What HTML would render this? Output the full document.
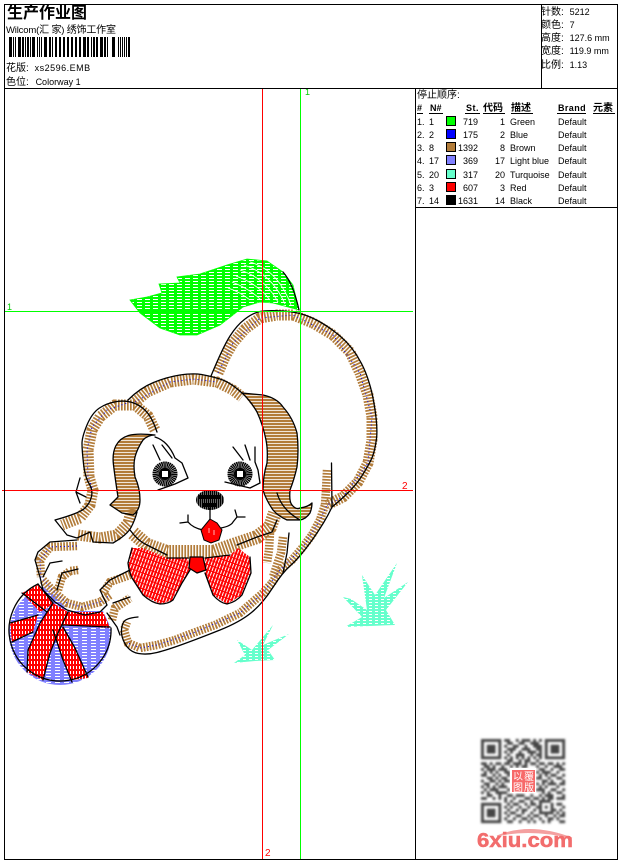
<!DOCTYPE html>
<html><head><meta charset="utf-8"><style>
html,body{margin:0;padding:0;background:#fff;width:620px;height:860px;overflow:hidden}
svg{display:block}
text{font-family:"Liberation Sans","WenQuanYi Zen Hei","Noto Sans CJK SC",sans-serif;font-size:9px;fill:#000}
.c{font-size:10px}
.b{font-weight:bold}
.e{text-anchor:end}
.s{fill:none;stroke:#b27c3a;stroke-width:11;stroke-dasharray:1.700 1.300}
.w{fill:none;stroke:#b27c3a;stroke-width:14;stroke-dasharray:1.700 1.300}
.s2{fill:none;stroke:#b27c3a;stroke-width:8.500;stroke-dasharray:1.700 1.300}
.d{fill:none;stroke:#00f;stroke-width:1;stroke-dasharray:1 3}
.k{fill:none;stroke:#000;stroke-width:1.3;stroke-linejoin:round;stroke-linecap:round}
.sw{stroke:#000;stroke-width:1}
.tw{fill:none;stroke:#fff;stroke-width:.8}
</style></head><body>
<svg width="620" height="860" viewBox="0 0 620 860" xmlns="http://www.w3.org/2000/svg">
<defs>
<pattern id="pg" width="8" height="3" patternUnits="userSpaceOnUse"><rect width="8" height="3" fill="#0f0"/><rect x="1" y="2" width="5" height="1" fill="#fff"/></pattern>
<pattern id="pb" width="3" height="3" patternUnits="userSpaceOnUse"><rect width="3" height="2.200" fill="#b27c3a"/></pattern>
<pattern id="pl" width="9" height="3" patternUnits="userSpaceOnUse"><rect width="9" height="3" fill="#8080ff"/><rect y="1" x="1" width="5" height="1" fill="#fff"/></pattern>
<pattern id="pr" width="3" height="5" patternUnits="userSpaceOnUse"><rect width="3" height="5" fill="#f00"/><rect x="1" y="1" width="1" height="3" fill="#fff"/></pattern>
<pattern id="prb" width="3" height="5" patternUnits="userSpaceOnUse" patternTransform="rotate(20)"><rect width="3" height="5" fill="#f00"/><rect x="1" y="0" width="1" height="4" fill="#fff"/></pattern>
<pattern id="pt" width="6" height="3" patternUnits="userSpaceOnUse"><rect width="6" height="2" fill="#66ffcc"/><rect y="2" width="3" height="1" fill="#66ffcc"/></pattern>
<pattern id="pn" width="2" height="6" patternUnits="userSpaceOnUse"><rect width="1.600" height="6" fill="#000"/></pattern>
<filter id="bl"><feGaussianBlur stdDeviation="0.4"/></filter>
</defs>

<!-- tail -->
<path d="M130 300L147 297L162 293L159 284L180 283L177 277L200 274L227 265L247 259L267 261L283 272L293 285L299 310L273 303L260 302L243 307L233 315L220 325L197 335L180 335L160 328L140 313Z" fill="url(#pg)" stroke="#0f0" stroke-width=".8"/>
<path class="tw" d="M250 262Q278 270 291 305M244 265Q272 274 285 304M240 270Q265 278 278 302M236 276Q258 284 270 300M232 282Q248 288 260 299M228 288Q240 292 250 300"/>
<path d="M283 272Q293 283 299 310" class="k"/>

<!-- ball -->
<circle cx="60" cy="634" r="51" fill="url(#pl)"/>
<path d="M22 593L38 585L53 603L47 608L40 612Z" fill="url(#pr)"/>
<path d="M53 603L68 612L58 633L50 653L43 680L27 672L28 650L40 623Z" fill="url(#pr)"/>
<path d="M10 623L38 615L33 632L12 642Z" fill="url(#pr)"/>
<path d="M68 612L103 612L110 628L62 625Z" fill="url(#pr)"/>
<path d="M53 630L63 627L75 648L88 678L72 680L63 660Z" fill="url(#pr)"/>
<path d="M38 583L57 597L68 611L103 611L111 628L125 610L100 570L50 570Z" fill="#fff"/>
<path class="k" d="M38 584A51 51 0 1 0 111 628"/>
<path class="k" d="M22 593L47 612M38 584L53 603M10 623L38 615M12 642L33 632M62 625L110 627M53 603L40 623L28 650L27 672M68 612L58 633L50 653L43 680M53 630L63 660L72 682M63 627L75 648L88 677"/>

<!-- brown stitch bands -->
<path class="s" d="M218 373L225 357L233 343L245 329L260 318L277 315L293 315L313 323L333 335L350 352L360 373L368 395L372 417L372 440L368 463L358 482L343 497L327 505"/>
<path class="s2" d="M327 470L326 490L325 505L320 520L312 535L303 547L292 560L280 570L272 583L263 593L240 613L215 625L193 633L175 640L157 645L140 648L128 643L124 630L127 622"/>
<path class="s" d="M135 402L147 392L170 382L193 379L217 382L233 390L242 397"/>
<path class="s" d="M155 430L148 416L135 405L115 405L100 417L92 430L88 450L89 477L93 490L90 505L80 518L62 525"/>
<path class="s" d="M78 535L100 538L117 535L128 523L132 508"/>
<path class="w" d="M133 533L147 545L167 552L190 552L213 552L233 545L257 537L270 527L275 513"/>
<path class="s2" d="M283 537L281 553L273 577"/>
<path class="s2" d="M270 533L269 550L267 563"/>
<path class="s2" d="M77 546L50 547L40 560L41 577"/>
<path class="s2" d="M43 580L55 593L67 603L82 607L100 602L110 595"/>
<path class="s2" d="M58 590L62 577L70 571L78 570"/>
<path class="s2" d="M103 593L110 582L130 575"/>
<path class="s2" d="M112 620L115 608L130 598"/>
<path d="M155 435Q137 433 128.500 435.500T116 445.500T113.500 465T116.500 487L118 497L110 505L122 513L133 515Q140 510 140 500Q140 488 135 477Q133 465 135 457T143 440Q148 435 155 435Z" fill="url(#pb)"/>
<path d="M242 393L263 395Q277 398 283 407Q293 418 297 433Q299 450 297 467Q294 480 290 490Q289 502 292 505Q296 510 300 508Q308 507 312 503Q312 508 310 513Q306 519 300 520L287 520Q278 516 273 510Q266 500 263 490Q263 476 267 463Q268 450 266 440Q263 425 257 412Z" fill="url(#pb)"/>

<!-- blue running stitch -->
<path class="d" d="M218 373L233 343L260 318L293 315L333 335L360 373L372 417L368 463L343 497L327 505L320 520L303 547L280 570L263 593L240 613L193 633L157 645L140 648L128 643"/>
<path class="d" d="M135 402L170 382L193 379L217 382M130 402L107 410L92 427L87 450L88 477L93 490"/>
<path class="d" d="M77 546L50 547L40 560L41 577L55 593L67 603L82 607L100 602L110 595"/>

<!-- bow -->
<path d="M132 548L143 548L167 558L188 558L190 570L182 583L173 600L160 604L143 595L132 578L128 563Z" fill="url(#prb)"/>
<path d="M205 558L230 555L238 548L250 557L251 573L242 595L227 604L213 595L205 573Z" fill="url(#prb)"/>
<path d="M190 557L203 557L206 570L197 573L189 568Z" fill="#f00"/>
<path class="k" d="M132 548L128 563Q129 572 132 578L143 595Q152 603 160 604Q168 604 173 600L182 583L190 570M167 558L188 558M205 573L213 595Q220 603 227 604Q236 602 242 595L251 573L250 557M205 558L230 555M190 557L203 557L206 570L197 573L189 568Z"/>

<!-- black outlines -->
<path class="k" d="M211 376Q223 347 230 336T245 319T260 311.500T283.500 311T313.500 318.500T340 336T361.500 363.500T374 403.500T376.500 438.500T372.500 456.500T361.500 476.500T332 507"/>
<path class="k" d="M331.500 463L332 507Q325 522 312.500 539.500T291 565T272.500 588T251.500 612.500T220 630T183.500 644T157 652.500T138.500 653.500T125.500 644.500T121.500 630T125 620.500T138 617"/>
<path class="k" d="M128 400Q140 388 153.500 382.500T180 375T201.500 374.500T220 379T242 393"/>
<path class="k" d="M242 393L263 395Q277 398 283 407Q293 418 297 433Q299 450 297 467Q294 480 290 490Q289 502 292 505Q296 510 300 508Q308 507 312 503Q312 508 310 513Q306 519 300 520L287 520Q278 516 273 510Q266 500 263 490Q263 476 267 463Q268 450 266 440Q263 425 257 412Q250 400 242 393M277 493Q282 510 300 520"/>
<path class="k" d="M157 432Q153 420 148 413.500T135 403.500T117 401.500T99.500 408T87 425T82 443.500T83.500 463.500T89 483.500T91.500 496.500T85 508T55 520L67 535L77 538L90 532L93 542L113 543Q127 535 131 527.500Q135 520 137 512"/>
<path class="k" d="M155 435Q137 433 128.500 435.500T116 445.500T113.500 465T116.500 487L118 497L110 505L122 513L133 515Q140 510 140 500Q140 488 135 477Q133 465 135 457T143 440Q148 435 155 435Z"/>
<path class="k" d="M289 533L287 553L283 573M277 520L272 532L257 537L237 545"/>
<path class="k" d="M130 530Q138 541 147 545L167 555"/>
<path class="k" d="M77 540L50 542L38 552L35 560L40 577L43 590L55 602L67 610L85 615L100 612L107 605L100 590L110 580L130 570M43 577L50 563L62 561M57 590L62 573L78 569M113 603L130 597M107 613L117 627L120 635"/>
<path class="k" d="M80 478L76 492L80 503M76 492L86 497"/>

<!-- face -->
<path class="k" d="M155 437Q168 441 175 458L182 463L188 478L175 484L158 490M153 445L160 460M162 445L172 458"/>
<path class="k" d="M233 447L243 460M245 445L250 460M255 447L255 462M225 482L250 488L260 483L258 470L255 462"/>
<g fill="none">
<circle cx="165" cy="474" r="8.500" stroke="#000" stroke-width="8" stroke-dasharray="1.200 .4"/>
<circle cx="240" cy="474" r="8.500" stroke="#000" stroke-width="8" stroke-dasharray="1.200 .4"/>
</g>
<circle cx="165" cy="474" r="6" fill="#000"/><circle cx="240" cy="474" r="6" fill="#000"/>
<rect x="162" y="471" width="6" height="6" fill="#fff"/><rect x="237" y="471" width="6" height="6" fill="#fff"/>
<ellipse cx="210" cy="500" rx="14" ry="10" fill="url(#pn)"/>
<path d="M199 497H221M203 505H217" stroke="#000" stroke-width="4"/>
<path class="k" d="M210 508V520M180 523L188 522L188 515M188 522Q193 528 203 530M221 528Q231 526 233 522L237 517L245 517M235 510L237 517"/>
<path d="M210 519L217 523L222 530L219 540L211 543L204 540L201 530Z" fill="#f00" stroke="#000"/>
<path d="M209 528v5M214 530v5" stroke="#fff" stroke-width=".7"/>

<!-- grass -->
<path d="M345 627L362 617L343 597L351 599L367 610L362 575L375 595L397 563L384 598L408 582L386 610L395 625L370 626Z" fill="url(#pt)"/>
<path d="M234 663L245 655L237 640L252 650L273 625L263 645L289 634L268 650L275 660L255 661Z" fill="url(#pt)"/>

<!-- guides -->
<path d="M4 311.500H413M300.500 88V859" stroke="#0f0" stroke-width="1"/>
<path d="M2 490.500H413M262.500 88V859" stroke="#f00" stroke-width="1"/>
<text x="305" y="95" style="fill:#0c0">1</text>
<text x="7" y="310" style="fill:#0c0">1</text>
<text x="402" y="489" style="fill:#f00;font-size:10px">2</text>
<text x="265" y="856" style="fill:#f00;font-size:10px">2</text>

<!-- frame -->
<path d="M4.500 4.500H617.500V859.500H4.500ZM4.500 88.500H617.500M541.500 4.500V88.500M415.500 88.500V859.500M415.500 207.500H617.500" fill="none" stroke="#000" stroke-width="1"/>

<!-- header -->
<text x="7" y="18" class="b" style="font-size:16px">生产作业图</text>
<text x="6" y="33" class="c" textLength="110"><tspan style="font-size:9.500px">Wilcom(</tspan>汇 家<tspan style="font-size:9.500px">) </tspan>绣饰工作室</text>
<path fill="#000" d="M9 37h3v20h-3zM13 37h1v20h-1zM15 37h1v20h-1zM18 37h3v20h-3zM22 37h2v20h-2zM25 37h1v20h-1zM27 37h2v20h-2zM30 37h1v20h-1zM32 37h3v20h-3zM37 37h1v20h-1zM39 37h1v20h-1zM41 37h1v20h-1zM44 37h3v20h-3zM49 37h2v20h-2zM52 37h1v20h-1zM55 37h2v20h-2zM59 37h2v20h-2zM63 37h2v20h-2zM67 37h2v20h-2zM71 37h2v20h-2zM75 37h2v20h-2zM79 37h2v20h-2zM83 37h3v20h-3zM87 37h2v20h-2zM91 37h1v20h-1zM93 37h2v20h-2zM96 37h2v20h-2zM100 37h3v20h-3zM104 37h2v20h-2zM107 37h1v20h-1zM112 37h3v20h-3zM118 37h1v20h-1zM120 37h1v20h-1zM122 37h1v20h-1zM124 37h1v20h-1zM126 37h1v20h-1zM128 37h2v20h-2z"/>
<text x="6" y="71" class="c">花版: <tspan dx="3" style="font-size:9px;letter-spacing:.5px">xs2596.EMB</tspan></text>
<text x="6" y="85" class="c">色位: <tspan dx="4" style="font-size:9px">Colorway 1</tspan></text>

<text x="541" y="15" class="c">针数: <tspan dx="3" style="font-size:9px">5212</tspan></text>
<text x="541" y="28" class="c">颜色: <tspan dx="3" style="font-size:9px">7</tspan></text>
<text x="541" y="41" class="c">高度: <tspan dx="3" style="font-size:9px">127.6 mm</tspan></text>
<text x="541" y="54" class="c">宽度: <tspan dx="3" style="font-size:9px">119.9 mm</tspan></text>
<text x="541" y="68" class="c">比例: <tspan dx="3" style="font-size:9px">1.13</tspan></text>

<!-- table -->
<text x="417" y="98" class="c">停止顺序:</text>
<text x="417" y="111" class="b">#</text><text x="430" y="111" class="b">N#</text>
<text x="479" y="111" class="b e" style="letter-spacing:.5px">St.</text>
<text x="483" y="111" class="c b">代码</text><text x="511" y="111" class="c b">描述</text>
<text x="558" y="111" class="b" style="letter-spacing:.4px">Brand</text><text x="593" y="111" class="c b">元素</text>
<path d="M417 113.500h6M429 113.500h14M465 113.500h15M483 113.500h22M511 113.500h22M557 113.500h29M593 113.500h22" stroke="#000"/>

<g>
<rect class="sw" x="446.500" y="116.500" width="9" height="9" fill="#0f0"/>
<rect class="sw" x="446.500" y="129.500" width="9" height="9" fill="#00f"/>
<rect class="sw" x="446.500" y="142.500" width="9" height="9" fill="#b27c3a"/>
<rect class="sw" x="446.500" y="155.500" width="9" height="9" fill="#8080ff"/>
<rect class="sw" x="446.500" y="169.500" width="9" height="9" fill="#66ffcc"/>
<rect class="sw" x="446.500" y="182.500" width="9" height="9" fill="#f00"/>
<rect class="sw" x="446.500" y="195.500" width="9" height="9" fill="#000"/>
</g>
<text x="417" y="125">1.</text><text x="429" y="125">1</text><text x="478" y="125" class="e">719</text><text x="505" y="125" class="e">1</text><text x="510" y="125">Green</text><text x="558" y="125">Default</text>
<text x="417" y="138">2.</text><text x="429" y="138">2</text><text x="478" y="138" class="e">175</text><text x="505" y="138" class="e">2</text><text x="510" y="138">Blue</text><text x="558" y="138">Default</text>
<text x="417" y="151">3.</text><text x="429" y="151">8</text><text x="478" y="151" class="e">1392</text><text x="505" y="151" class="e">8</text><text x="510" y="151">Brown</text><text x="558" y="151">Default</text>
<text x="417" y="164">4.</text><text x="429" y="164">17</text><text x="478" y="164" class="e">369</text><text x="505" y="164" class="e">17</text><text x="510" y="164">Light blue</text><text x="558" y="164">Default</text>
<text x="417" y="178">5.</text><text x="429" y="178">20</text><text x="478" y="178" class="e">317</text><text x="505" y="178" class="e">20</text><text x="510" y="178">Turquoise</text><text x="558" y="178">Default</text>
<text x="417" y="191">6.</text><text x="429" y="191">3</text><text x="478" y="191" class="e">607</text><text x="505" y="191" class="e">3</text><text x="510" y="191">Red</text><text x="558" y="191">Default</text>
<text x="417" y="204">7.</text><text x="429" y="204">14</text><text x="478" y="204" class="e">1631</text><text x="505" y="204" class="e">14</text><text x="510" y="204">Black</text><text x="558" y="204">Default</text>

<!-- QR -->
<g transform="translate(481 739) scale(2.9)" filter="url(#bl)">
<path fill="none" stroke="#444" stroke-width="1" d="M.5 .5h6v6h-6zM22.500 .5h6v6h-6zM.5 22.500h6v6h-6z"/>
<path fill="#444" d="M2 2h3v3h-3zM24 2h3v3h-3zM2 24h3v3h-3z"/>
<path fill="none" stroke="#444" stroke-width="1" d="M8 .5h2M12 .5h1M14 .5h3M18 .5h1M20 .5h1M9 1.500h2M13 1.500h2M17 1.500h3M8 2.500h1M11 2.500h2M15 2.500h1M18 2.500h3M9 3.500h3M14 3.500h3M19 3.500h2M8 4.500h1M10 4.500h1M13 4.500h1M16 4.500h3M20 4.500h1M9 5.500h1M12 5.500h3M17 5.500h1M19 5.500h2M8 6.500h1M10 6.500h1M12 6.500h1M14 6.500h1M16 6.500h1M18 6.500h1M20 6.500h1M9 7.500h2M13 7.500h1M15 7.500h2M19 7.500h1M0 8.500h2M3 8.500h1M5 8.500h2M8 8.500h2M11 8.500h3M15 8.500h1M17 8.500h2M20 8.500h2M23 8.500h2M26 8.500h1M28 8.500h1M1 9.500h2M4 9.500h1M7 9.500h1M10 9.500h1M12 9.500h1M14 9.500h2M19 9.500h1M22 9.500h1M25 9.500h3M0 10.500h1M2 10.500h3M6 10.500h3M20 10.500h2M24 10.500h1M27 10.500h2M1 11.500h1M3 11.500h1M5 11.500h1M8 11.500h2M19 11.500h1M21 11.500h3M26 11.500h1M0 12.500h2M4 12.500h1M6 12.500h1M9 12.500h1M20 12.500h1M22 12.500h1M24 12.500h2M28 12.500h1M2 13.500h2M5 13.500h1M7 13.500h2M19 13.500h2M23 13.500h1M26 13.500h2M0 14.500h1M3 14.500h2M6 14.500h1M8 14.500h2M21 14.500h2M24 14.500h1M28 14.500h1M1 15.500h2M5 15.500h1M7 15.500h1M19 15.500h1M21 15.500h1M23 15.500h3M27 15.500h2M0 16.500h1M2 16.500h1M4 16.500h1M6 16.500h3M20 16.500h1M22 16.500h1M26 16.500h1M1 17.500h1M3 17.500h3M9 17.500h1M19 17.500h3M24 17.500h2M28 17.500h1M0 18.500h1M2 18.500h1M5 18.500h4M21 18.500h1M23 18.500h1M26 18.500h2M2 19.500h2M6 19.500h1M9 19.500h2M12 19.500h3M17 19.500h1M20 19.500h1M22 19.500h3M28 19.500h1M0 20.500h2M4 20.500h1M6 20.500h1M8 20.500h1M11 20.500h1M15 20.500h2M18 20.500h2M21 20.500h1M23 20.500h2M26 20.500h3M8 21.500h1M10 21.500h1M13 21.500h2M17 21.500h1M20 21.500h4M9 22.500h1M11 22.500h2M15 22.500h1M17 22.500h2M20 22.500h1M24 22.500h1M26 22.500h2M8 23.500h1M10 23.500h1M13 23.500h1M16 23.500h1M19 23.500h2M22 23.500h1M24 23.500h1M28 23.500h1M9 24.500h1M12 24.500h1M14 24.500h2M18 24.500h1M20 24.500h1M24 24.500h2M27 24.500h1M8 25.500h1M10 25.500h2M14 25.500h1M17 25.500h1M20 25.500h5M26 25.500h1M28 25.500h1M9 26.500h1M12 26.500h2M16 26.500h1M18 26.500h2M22 26.500h1M25 26.500h1M27 26.500h2M8 27.500h1M11 27.500h1M14 27.500h2M17 27.500h1M20 27.500h1M23 27.500h2M26 27.500h1M9 28.500h2M13 28.500h1M16 28.500h1M18 28.500h1M21 28.500h1M23 28.500h1M27 28.500h2"/>
</g>
<rect x="510" y="768" width="26" height="25" fill="#fff"/>
<rect x="512" y="770" width="23" height="22" fill="#f76a6a"/>
<text x="513" y="780" style="fill:#fff;font-size:10px">以</text><text x="524" y="780" style="fill:#fff;font-size:10px">覆</text>
<text x="513" y="791" style="fill:#fff;font-size:10px">图</text><text x="524" y="791" style="fill:#fff;font-size:10px">版</text>

<!-- 6xiu -->
<path d="M497 836Q530 822 572 838Q530 828 497 836Z" fill="#f4a0a0" stroke="#f4a0a0"/>
<text x="477" y="847" textLength="96" lengthAdjust="spacingAndGlyphs" class="b" style="font-size:20px;fill:#f26d6d;stroke:#f26d6d;stroke-width:.5">6xiu.com</text>
</svg>
</body></html>
